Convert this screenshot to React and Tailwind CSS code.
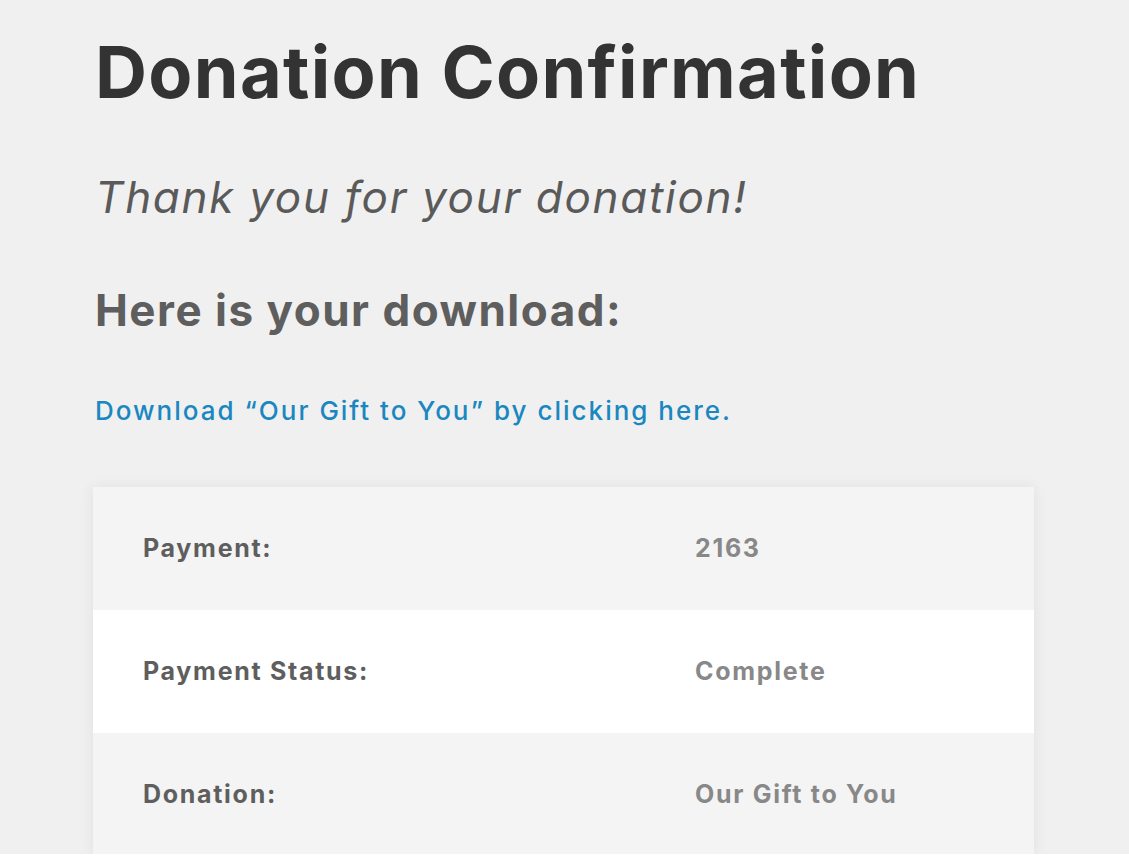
export default function App() {
  const rows = [
    { label: 'Payment:', value: '2163' },
    { label: 'Payment Status:', value: 'Complete' },
    { label: 'Donation:', value: 'Our Gift to You' },
  ];

  return (
    <div className="min-h-screen bg-white font-['Inter',sans-serif]">
      <div className="h-[854px] overflow-hidden bg-[#f0f0f0] pl-[93px] pr-[95px] pt-[28px]">
        <h1 className="ml-[2px] text-[72px] leading-[88px] font-bold tracking-[1.3px] text-[#333333]">Donation Confirmation</h1>
        <p className="ml-[2px] mt-[51px] text-[44px] leading-[60px] italic tracking-[1.7px] text-[#5a5a5a]">Thank you for your donation!</p>
        <h2 className="ml-[2px] mt-[58px] text-[44px] leading-[50px] font-bold tracking-[1.5px] text-[#5e5e5e]">Here is your download:</h2>
        <a href="#" className="ml-[2px] mt-[58px] block text-[26px] leading-[36px] font-medium tracking-[2px] text-[#1a87c0]">
          Download “Our Gift to You” by clicking here.
        </a>
        <div className="mt-[58px] w-[941px] bg-white shadow-[0_0_14px_rgba(0,0,0,0.07)]">
          {rows.map((row, i) => (
            <div
              key={row.label}
              className={`grid grid-cols-[552px_1fr] h-[123px] items-center ${i % 2 === 0 ? 'bg-[#f4f4f4]' : 'bg-white'}`}
            >
              <div className="pl-[50px] text-[25px] font-bold tracking-[1.7px] text-[#5e5e5e]">{row.label}</div>
              <div className="pl-[50px] text-[25px] font-bold tracking-[1.7px] text-[#888888]">{row.value}</div>
            </div>
          ))}
        </div>
      </div>
    </div>
  );
}
